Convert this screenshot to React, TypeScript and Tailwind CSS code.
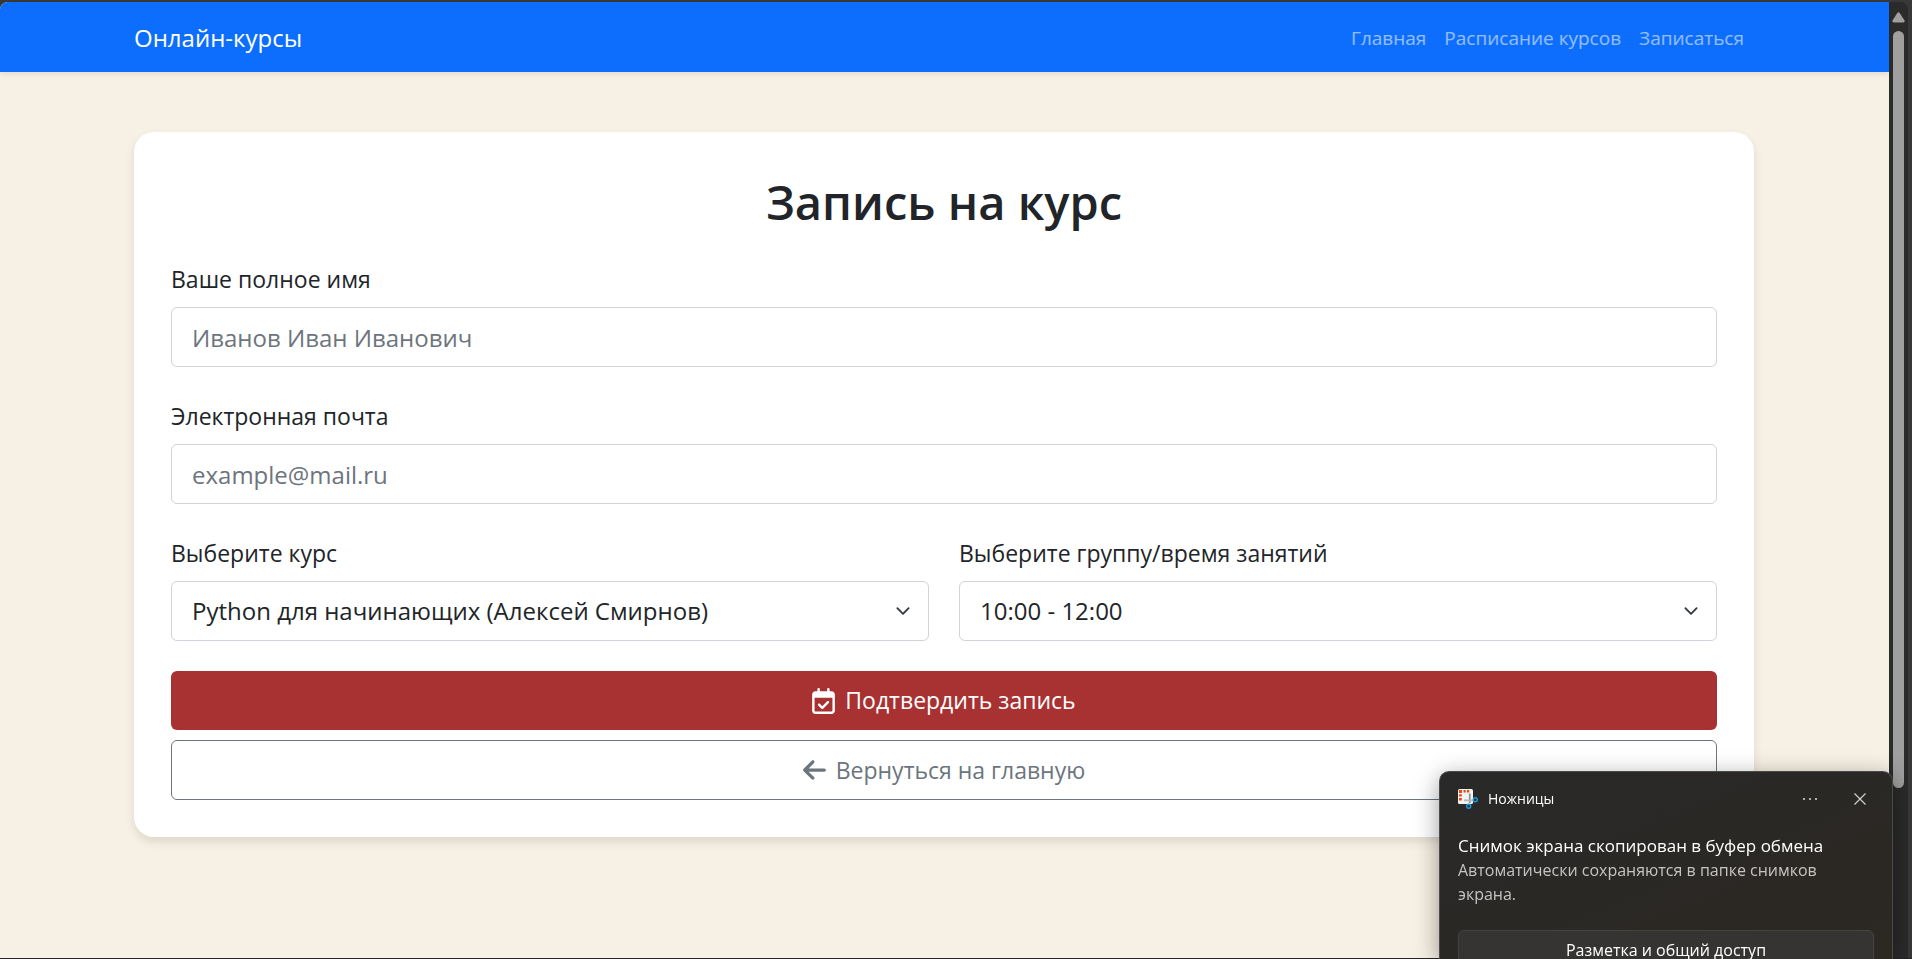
import { useState, type ReactNode } from "react";
import { FaArrowLeft, FaRegCalendarCheck } from "react-icons/fa6";

const fieldBox =
  "block h-[60px] w-full rounded-md border bg-white px-5 text-2xl text-[#212529] outline-none";

function Field({ id, label, children }: { id: string; label: string; children: ReactNode }) {
  return (
    <div className="min-w-0 flex-1">
      <label htmlFor={id} className="mb-2 block text-[23px] leading-[39px]">
        {label}
      </label>
      {children}
    </div>
  );
}

function Select({ id, options }: { id: string; options: string[] }) {
  return (
    <div className="relative">
      <select id={id} className={`${fieldBox} appearance-none border-[#ced4da] pr-14`}>
        {options.map((option) => (
          <option key={option}>{option}</option>
        ))}
      </select>
      <svg
        viewBox="0 0 16 16"
        className="pointer-events-none absolute top-1/2 right-4 h-[15px] w-5 -translate-y-1/2"
        fill="none"
        stroke="#343a40"
        strokeWidth="2"
        strokeLinecap="round"
        strokeLinejoin="round"
      >
        <path d="m2 5 6 6 6-6" />
      </svg>
    </div>
  );
}

function Navbar() {
  return (
    <nav className="relative rounded-tl-lg bg-[#0d6efd] shadow-[0_3px_5px_rgba(0,0,0,0.075)]">
      <div className="mx-auto flex h-[70px] max-w-[1651px] items-center justify-between pt-0.5 pr-4 pl-[15px]">
        <a href="#" className="text-2xl text-white">
          Онлайн-курсы
        </a>
        <div className="flex gap-[18px] px-2.5 text-[19px] text-white/55">
          <a href="#">Главная</a>
          <a href="#">Расписание курсов</a>
          <a href="#">Записаться</a>
        </div>
      </div>
    </nav>
  );
}

function EnrollForm() {
  return (
    <form
      className="rounded-[20px] bg-white px-[37px] pt-10 pb-[37px] shadow-[0_5px_10px_rgba(0,0,0,0.1)]"
      onSubmit={(event) => event.preventDefault()}
    >
      <h1 className="mb-7 text-center text-[47px] leading-[60px] font-semibold">Запись на курс</h1>
      <div className="flex flex-col gap-[30px]">
        <Field id="name" label="Ваше полное имя">
          <input
            id="name"
            type="text"
            placeholder="Иванов Иван Иванович"
            className={`${fieldBox} border-[#d3d3d3] placeholder:text-[#6c757d]`}
          />
        </Field>
        <Field id="email" label="Электронная почта">
          <input
            id="email"
            type="email"
            placeholder="example@mail.ru"
            className={`${fieldBox} border-[#d3d3d3] placeholder:text-[#6c757d]`}
          />
        </Field>
        <div className="flex gap-[30px]">
          <Field id="course" label="Выберите курс">
            <Select id="course" options={["Python для начинающих (Алексей Смирнов)"]} />
          </Field>
          <Field id="time" label="Выберите группу/время занятий">
            <Select id="time" options={["10:00 - 12:00"]} />
          </Field>
        </div>
        <div className="flex flex-col gap-2.5">
          <button
            type="submit"
            className="flex h-[59px] items-center justify-center gap-2.5 rounded-md bg-[#a83232] text-[23px] text-white"
          >
            <FaRegCalendarCheck className="h-[26px] w-[23px]" />
            Подтвердить запись
          </button>
          <a
            href="#"
            className="flex h-[60px] items-center justify-center gap-2.5 rounded-md border border-[#6c757d] text-[23px] text-[#6c757d]"
          >
            <FaArrowLeft className="h-[26px] w-[23px]" />
            Вернуться на главную
          </a>
        </div>
      </div>
    </form>
  );
}

function ScrollBar() {
  return (
    <div className="flex w-[23px] shrink-0 bg-[#383838]" aria-hidden="true">
      <div className="flex w-[19px] flex-col items-center rounded-tr-lg bg-[#2b2b2b] pt-2.5">
        <svg viewBox="0 0 13 11" className="h-[11px] w-[13px] shrink-0" fill="#9f9f9f">
          <path d="M5.3 1.1Q6.5-.4 7.7 1.1L12.5 8.4Q13.2 10.4 11.4 10.4H1.6Q-.2 10.4.5 8.4Z" />
        </svg>
        <div className="mt-2 h-[80%] w-[11px] rounded-full bg-[#9f9f9f]" />
      </div>
    </div>
  );
}

function SnipIcon() {
  return (
    <svg viewBox="0 0 20 20" className="size-5">
      <rect width="15" height="15" rx="1.5" fill="#f3f3f3" />
      <path
        d="M1 1h3v3H1zM5.5 1h2.2v2.6H5.5zM9 1h2.2v2.6H9zM1 5.2h2.8v2.4H1zM1 9h2.8v2.4H1z"
        fill="#e8490f"
      />
      <path d="M11.8 4.5v9.5" stroke="#8b9299" strokeWidth="1.8" />
      <path d="M6 11.3h9.5" stroke="#b4babf" strokeWidth="1.8" />
      <circle cx="17.3" cy="10.7" r="2" fill="none" stroke="#1d9be0" strokeWidth="1.4" />
      <circle cx="10.7" cy="17.3" r="2" fill="none" stroke="#1d9be0" strokeWidth="1.4" />
    </svg>
  );
}

function Toast({ onClose }: { onClose: () => void }) {
  return (
    <section className="fixed right-[19px] bottom-0 h-[188px] w-[454px] rounded-t-[10px] border border-b-0 border-[#4a4a48] bg-linear-to-br from-[#292929] to-[#2c2822] px-[18px] text-white shadow-[0_6px_24px_rgba(0,0,0,0.4)]">
      <header className="flex h-[54px] items-center text-sm">
        <SnipIcon />
        <span className="ml-2.5 flex-1">Ножницы</span>
        <button type="button" aria-label="Ещё" className="flex h-8 w-12 items-center justify-center">
          <svg viewBox="0 0 16 4" className="h-1 w-4" fill="#d0d0d0">
            <circle cx="2" cy="2" r="1.1" />
            <circle cx="8" cy="2" r="1.1" />
            <circle cx="14" cy="2" r="1.1" />
          </svg>
        </button>
        <button
          type="button"
          aria-label="Закрыть"
          onClick={onClose}
          className="ml-3 flex h-8 w-7 items-center justify-center"
        >
          <svg viewBox="0 0 12 12" className="size-3" stroke="#d0d0d0" strokeWidth="1.2">
            <path d="M.5.5l11 11M11.5.5l-11 11" />
          </svg>
        </button>
      </header>
      <div className="mt-2 leading-6">
        <p className="text-[17px]">Снимок экрана скопирован в буфер обмена</p>
        <p className="text-base leading-6 text-[#c5c4c2]">
          Автоматически сохраняются в папке снимков экрана.
        </p>
      </div>
      <button
        type="button"
        className="mt-6 h-10 w-full rounded-md border border-[#454442] bg-[#353432] text-base"
      >
        Разметка и общий доступ
      </button>
    </section>
  );
}

export default function App() {
  const [toastOpen, setToastOpen] = useState(true);

  return (
    <div className="flex min-h-screen flex-col border-t-2 border-b border-t-[#383838] border-b-[#252525] bg-[#383838] font-['Open_Sans','Noto_Sans',sans-serif] text-[#212529]">
      <div className="flex flex-1">
        <div className="min-w-0 flex-1 rounded-tl-lg bg-[#f7f0e4]">
          <Navbar />
          <main className="mx-auto max-w-[1651px] py-[60px] pr-4 pl-[15px]">
            <EnrollForm />
          </main>
        </div>
        <ScrollBar />
      </div>
      {toastOpen && <Toast onClose={() => setToastOpen(false)} />}
    </div>
  );
}
